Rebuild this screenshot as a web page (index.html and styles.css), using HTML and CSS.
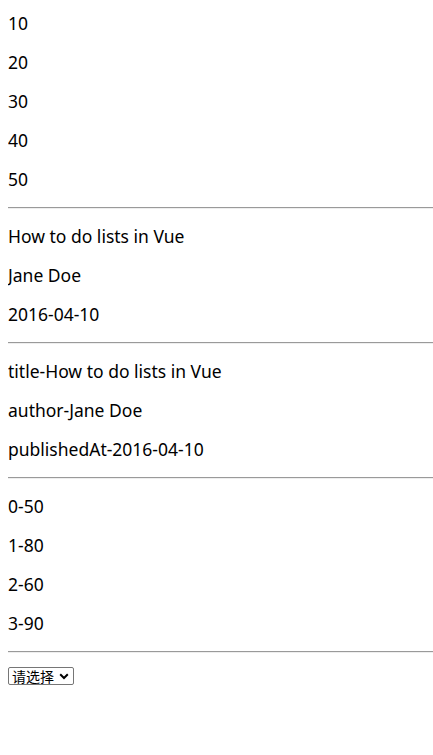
FILE: index.html
```html
<!DOCTYPE html>
<html lang="zh-CN">
<head>
<meta charset="utf-8">
<title>Vue lists</title>
<link rel="stylesheet" href="styles.css">
</head>
<body>
<section class="list">
  <p class="item">10</p>
  <p class="item">20</p>
  <p class="item">30</p>
  <p class="item">40</p>
  <p class="item">50</p>
</section>
<hr class="divider">
<section class="list">
  <p class="item">How to do lists in Vue</p>
  <p class="item">Jane Doe</p>
  <p class="item">2016-04-10</p>
</section>
<hr class="divider">
<section class="list">
  <p class="item">title-How to do lists in Vue</p>
  <p class="item">author-Jane Doe</p>
  <p class="item">publishedAt-2016-04-10</p>
</section>
<hr class="divider">
<section class="list">
  <p class="item">0-50</p>
  <p class="item">1-80</p>
  <p class="item">2-60</p>
  <p class="item">3-90</p>
</section>
<hr class="divider">
<div class="picker">
  <span class="select-wrap">
    <select class="select">
      <option>请选择</option>
    </select>
    <svg class="chevron" width="10" height="7" viewBox="0 0 10 7" aria-hidden="true"><path d="M1.2 1.3 L5 5 L8.8 1.3" fill="none" stroke="#000" stroke-width="2"/></svg>
  </span>
</div>
</body>
</html>
```
FILE: styles.css
```css
html, body {
  background: #fff;
}
body {
  margin: 0 0 8px 8px;
  color: #000;
  font-family: "Noto Sans", "Noto Sans CJK SC", sans-serif;
  font-size: 17.5px;
}
.list .item {
  margin: 16px 0;
  line-height: 23px;
  height: 23px;
}
.list:first-child .item:first-child {
  margin-top: 12px;
}
.divider {
  margin: 8px 0;
  border: 0;
  border-top: 1px solid #9a9a9a;
  border-bottom: 1px solid #eeeeee;
  height: 0;
}
.picker {
  display: flex;
  margin-top: 14px;
}
.select-wrap {
  position: relative;
  display: block;
}
.select {
  appearance: none;
  -webkit-appearance: none;
  display: block;
  margin: 0;
  height: 18px;
  width: 66px;
  padding: 0 14px 0 3px;
  border: 1px solid #767676;
  border-radius: 2px;
  background: #fff;
  color: #000;
  font-family: "Noto Sans CJK SC", sans-serif;
  font-size: 14px;
  line-height: 16px;
}
.chevron {
  position: absolute;
  right: 5px;
  top: 6px;
  pointer-events: none;
}
```
